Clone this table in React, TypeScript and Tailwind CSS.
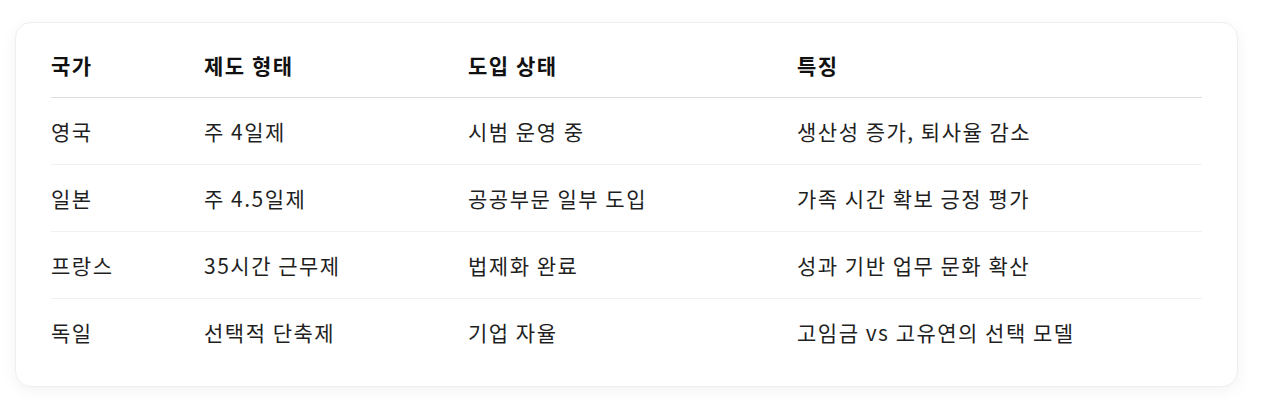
const rows = [
  ['영국', '주 4일제', '시범 운영 중', '생산성 증가, 퇴사율 감소'],
  ['일본', '주 4.5일제', '공공부문 일부 도입', '가족 시간 확보 긍정 평가'],
  ['프랑스', '35시간 근무제', '법제화 완료', '성과 기반 업무 문화 확산'],
  ['독일', '선택적 단축제', '기업 자율', '고임금 vs 고유연의 선택 모델'],
];

const headers = ['국가', '제도 형태', '도입 상태', '특징'];

export default function App() {
  return (
    <div
      className="min-h-[408px] bg-white pl-[15px] pt-[22px] text-[#1f1f1f]"
      style={{ fontFamily: '"Noto Sans CJK KR", "Noto Sans", sans-serif' }}
    >
      <div className="w-[1223px] rounded-[16px] border border-[#efefef] bg-white px-[35px] pt-[10px] pb-[21px] shadow-[0_4px_16px_rgba(0,0,0,0.05)]">
        <table className="w-full border-collapse text-left text-[21px] leading-[28px] tracking-[1.5px]">
          <colgroup>
            <col className="w-[153px]" />
            <col className="w-[264px]" />
            <col className="w-[329px]" />
            <col />
          </colgroup>
          <thead>
            <tr className="border-b border-[#dcdcdc]">
              {headers.map((h) => (
                <th key={h} className="py-[18px] font-bold text-[#111]">
                  {h}
                </th>
              ))}
            </tr>
          </thead>
          <tbody>
            {rows.map((r, i) => (
              <tr key={i} className={i < rows.length - 1 ? 'border-b border-[#f0f0f0]' : ''}>
                {r.map((c, j) => (
                  <td key={j} className="py-[19px] font-normal">
                    {c}
                  </td>
                ))}
              </tr>
            ))}
          </tbody>
        </table>
      </div>
    </div>
  );
}
